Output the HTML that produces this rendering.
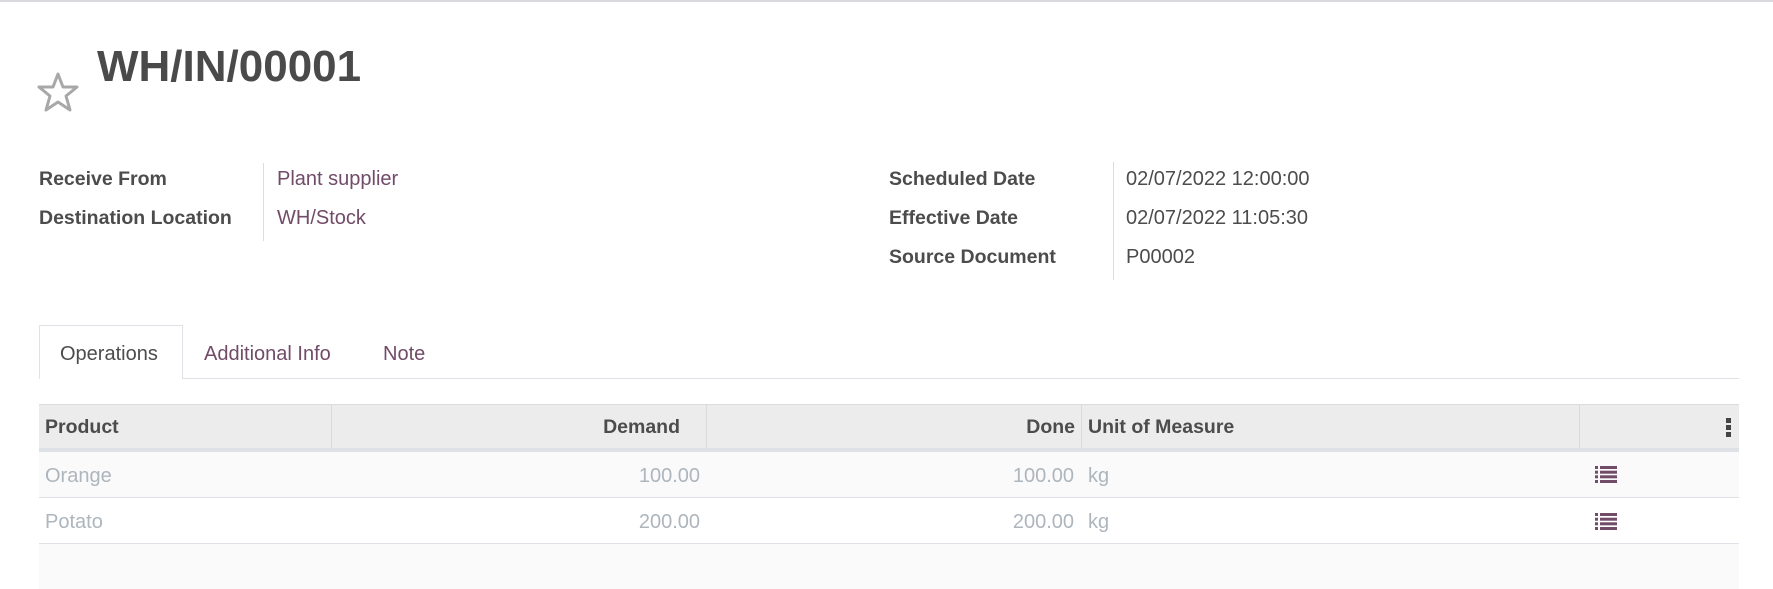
<!DOCTYPE html>
<html><head><meta charset="utf-8"><style>
*{margin:0;padding:0;box-sizing:border-box}
body{width:1773px;height:589px;background:#fff;font-family:"Liberation Sans",sans-serif;position:relative;overflow:hidden;color:#4c4c4c}
.a{position:absolute;white-space:nowrap}
.lbl{font-weight:bold;font-size:19.5px;color:#4c4c4c}
.val{font-size:20px;color:#4c4c4c}
.lnk{color:#714b67}
.vl{position:absolute;width:1px;background:#dcdcdc}
.row{position:absolute;left:39px;width:1700px;border-bottom:1px solid #dee2e6}
.g{color:#adb5bd;font-size:20px}
</style></head><body>
<div style="position:absolute;left:0;top:0;width:1773px;height:2px;background:#d8dadd"></div>
<svg class="a" style="left:37px;top:72px" width="42" height="40" viewBox="0 0 42 40"><polygon points="21,2 26,15 40,15 29,24 33,38 21,30 9,38 13,24 2,15 16,15" fill="none" stroke="#a8a8a8" stroke-width="3" stroke-linejoin="round"/></svg>
<div class="a" style="left:97px;top:42px;font-size:44px;font-weight:bold;color:#4a4a4a">WH/IN/00001</div>

<div class="a lbl" style="left:39px;top:168px">Receive From</div>
<div class="a lbl" style="left:39px;top:207px">Destination Location</div>
<div class="vl" style="left:263px;top:163px;height:78px"></div>
<div class="a val lnk" style="left:277px;top:168px">Plant supplier</div>
<div class="a val lnk" style="left:277px;top:207px">WH/Stock</div>

<div class="a lbl" style="left:889px;top:168px">Scheduled Date</div>
<div class="a lbl" style="left:889px;top:207px">Effective Date</div>
<div class="a lbl" style="left:889px;top:246px">Source Document</div>
<div class="vl" style="left:1113px;top:162px;height:118px"></div>
<div class="a val" style="left:1126px;top:168px">02/07/2022 12:00:00</div>
<div class="a val" style="left:1126px;top:207px">02/07/2022 11:05:30</div>
<div class="a val" style="left:1126px;top:246px">P00002</div>

<div style="position:absolute;left:39px;top:378px;width:1700px;height:1px;background:#dee2e6"></div>
<div style="position:absolute;left:39px;top:325px;width:144px;height:54px;background:#fff;border:1px solid #dee2e6;border-bottom:none"></div>
<div class="a" style="left:60px;top:343px;font-size:20px;color:#4c4c4c">Operations</div>
<div class="a lnk" style="left:204px;top:343px;font-size:20px">Additional Info</div>
<div class="a lnk" style="left:383px;top:343px;font-size:20px">Note</div>

<div style="position:absolute;left:39px;top:404px;width:1700px;background:#ececec;border-top:1px solid #dcdcdc;border-bottom:4px solid #dee2e6;height:48px"></div>
<div class="vl" style="left:331px;top:405px;height:43px;background:#dadada"></div>
<div class="vl" style="left:706px;top:405px;height:43px;background:#dadada"></div>
<div class="vl" style="left:1081px;top:405px;height:43px;background:#dadada"></div>
<div class="vl" style="left:1579px;top:405px;height:43px;background:#dadada"></div>
<div class="a lbl" style="left:45px;top:416px">Product</div>
<div class="a lbl" style="left:560px;top:416px;width:120px;text-align:right">Demand</div>
<div class="a lbl" style="left:955px;top:416px;width:120px;text-align:right">Done</div>
<div class="a lbl" style="left:1088px;top:416px">Unit of Measure</div>
<div class="a" style="left:1726px;top:418px;width:5px">
<div style="width:5px;height:5px;background:#444;margin-bottom:2px"></div><div style="width:5px;height:5px;background:#444;margin-bottom:2px"></div><div style="width:5px;height:5px;background:#444"></div></div>

<div class="row" style="top:452px;height:46px;background:#fafafa"></div>
<div class="row" style="top:498px;height:46px;background:#fff"></div>
<div style="position:absolute;left:39px;top:544px;width:1700px;height:45px;background:#fafafa"></div>

<div class="a g" style="left:45px;top:465px">Orange</div>
<div class="a g" style="left:580px;top:465px;width:120px;text-align:right">100.00</div>
<div class="a g" style="left:954px;top:465px;width:120px;text-align:right">100.00</div>
<div class="a g" style="left:1088px;top:465px">kg</div>
<div class="a g" style="left:45px;top:511px">Potato</div>
<div class="a g" style="left:580px;top:511px;width:120px;text-align:right">200.00</div>
<div class="a g" style="left:954px;top:511px;width:120px;text-align:right">200.00</div>
<div class="a g" style="left:1088px;top:511px">kg</div>

<svg class="a" style="left:1595px;top:466px" width="22" height="17" viewBox="0 0 22 17"><g fill="#714b67"><rect x="0" y="0" width="3" height="3"/><rect x="5" y="0" width="17" height="3"/><rect x="0" y="4.7" width="3" height="3"/><rect x="5" y="4.7" width="17" height="3"/><rect x="0" y="9.3" width="3" height="3"/><rect x="5" y="9.3" width="17" height="3"/><rect x="0" y="14" width="3" height="3"/><rect x="5" y="14" width="17" height="3"/></g></svg>
<svg class="a" style="left:1595px;top:513px" width="22" height="17" viewBox="0 0 22 17"><g fill="#714b67"><rect x="0" y="0" width="3" height="3"/><rect x="5" y="0" width="17" height="3"/><rect x="0" y="4.7" width="3" height="3"/><rect x="5" y="4.7" width="17" height="3"/><rect x="0" y="9.3" width="3" height="3"/><rect x="5" y="9.3" width="17" height="3"/><rect x="0" y="14" width="3" height="3"/><rect x="5" y="14" width="17" height="3"/></g></svg>
</body></html>
